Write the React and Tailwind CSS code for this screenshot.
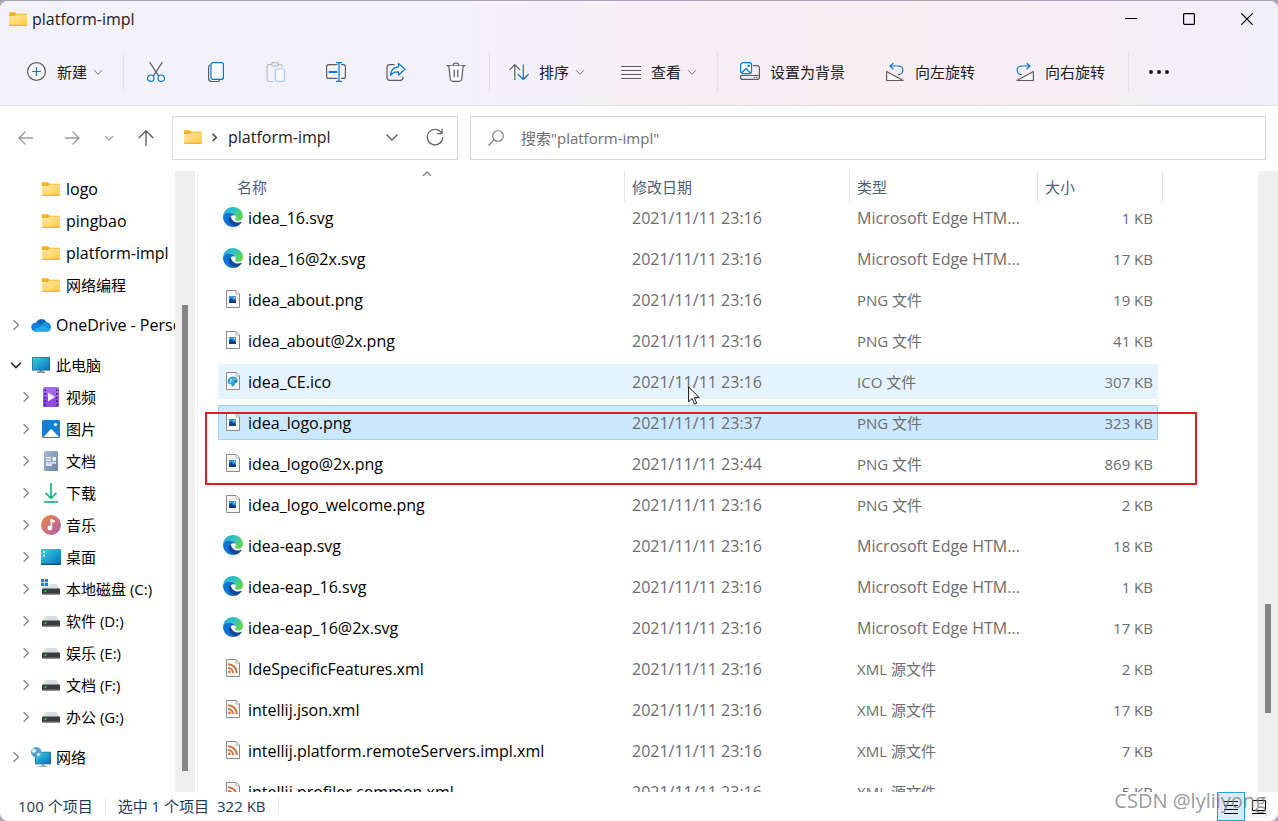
import React, { useState } from "react";

const FolderIcon = () => (
  <svg width="18" height="16" viewBox="0 0 18 16" className="shrink-0">
    <defs>
      <linearGradient id="folder" x1="0" y1="0" x2="1" y2="1">
        <stop offset="0" stopColor="#ffe7a0" />
        <stop offset="1" stopColor="#ffcb45" />
      </linearGradient>
    </defs>
    <path d="M0 2.5a1.3 1.3 0 0 1 1.3-1.3h4.4l2 1.6H17a1 1 0 0 1 1 1V8H0z" fill="#f5b117" />
    <path d="M0 5h5.8l1.7-1.4H18v10.2a1 1 0 0 1-1 1H1a1 1 0 0 1-1-1z" fill="url(#folder)" />
    <path d="M0 13.8h18a1 1 0 0 1-1 1H1a1 1 0 0 1-1-1z" fill="#e5a62c" />
  </svg>
);

const Chevron = ({ dir = "down", size = 10, color = "#777", width = 1.2 }) => {
  const paths = {
    down: "M1 3.2 5 7.2 9 3.2",
    up: "M1 6.8 5 2.8 9 6.8",
    right: "M3 1 7 5 3 9",
  };
  return (
    <svg width={size} height={size} viewBox="0 0 10 10" fill="none" className="shrink-0">
      <path d={paths[dir]} stroke={color} strokeWidth={(width * 10) / size} />
    </svg>
  );
};

const Line = ({ children, size = 20 }) => (
  <svg
    width={size}
    height={size}
    viewBox="0 0 20 20"
    fill="none"
    stroke="#5c5c5f"
    strokeWidth="1.2"
    strokeLinecap="round"
    strokeLinejoin="round"
    className="shrink-0"
  >
    {children}
  </svg>
);

const BLUE = "#0078d4";

const NewIcon = () => (
  <Line>
    <circle cx="9.5" cy="9.5" r="8.9" fill="#fafafd" />
    <path d="M9.5 5.5v8M5.5 9.5h8" stroke={BLUE} />
  </Line>
);
const CutIcon = () => (
  <Line>
    <path d="M4 .6 12.3 13.6M16 .6 7.7 13.6" />
    <circle cx="4.8" cy="16.2" r="3.2" stroke={BLUE} />
    <circle cx="15.2" cy="16.2" r="3.2" stroke={BLUE} />
  </Line>
);
const CopyIcon = () => (
  <Line>
    <path d="M4 3C3 3.4 2.6 4 2.6 5v11.500a3 3 0 0 0 3 3h5.600c1.200 0 2-.5 2.500-1.500" />
    <rect x="5" y=".6" width="12.400" height="16.800" rx="2" stroke={BLUE} fill="#fafafd" />
  </Line>
);
const PasteIcon = () => (
  <Line>
    <g stroke="#bdbbc2">
      <path d="M6 2.500H2.600a1.500 1.500 0 0 0-1.500 1.500v14a1.500 1.500 0 0 0 1.500 1.500h4.800M12 2.500h2.500A1.500 1.500 0 0 1 16 4v1" />
      <rect x="5.500" y=".7" width="7" height="3.200" rx="1.600" />
    </g>
    <rect x="9.300" y="7" width="9.200" height="12.400" rx="1.500" stroke="#a5cdf0" fill="#f6f8fd" />
  </Line>
);
const RenameIcon = () => (
  <Line>
    <path d="M11 2.600H2.800a2.200 2.200 0 0 0-2.200 2.200v9.400a2.200 2.200 0 0 0 2.200 2.200H11M15.500 2.600h1.700a2.200 2.200 0 0 1 2.200 2.200v9.400a2.200 2.200 0 0 1-2.200 2.200h-1.700" />
    <path d="M3.500 10h7" stroke={BLUE} strokeWidth="2" />
    <path d="M10.500.6h5M13 .6v18.800M10.500 19.400h5" stroke={BLUE} />
  </Line>
);
const ShareIcon = () => (
  <Line>
    <path d="M8 2.600H3.800A2.800 2.800 0 0 0 1 5.400v10.200a2.800 2.800 0 0 0 2.800 2.800h10.400a2.800 2.800 0 0 0 2.800-2.800V15" />
    <path
      d="M12.500 1.500 19 7.300l-6.500 5.700V9.800C8.800 9.600 6.300 10.800 4.500 13.500 4.800 8.700 7.500 5.300 12.500 4.900z"
      stroke={BLUE}
      fill="#f8fafe"
    />
  </Line>
);
const TrashIcon = () => (
  <Line>
    <path d="M1 3.600h18M7.200 3.400a2.800 2.400 0 0 1 5.600 0" />
    <path d="M2.800 3.800l1.500 13.400a2.500 2.500 0 0 0 2.400 2.200h6.600a2.500 2.500 0 0 0 2.400-2.200l1.500-13.400" fill="#fafafd" />
    <path d="M8.200 8v6.500M11.800 8v6.500" />
  </Line>
);
const SortIcon = () => (
  <Line>
    <path d="M5.800 17.500V2.800M.8 7.600 5.800 2.600l5 5" />
    <path d="M14.300 2.800v14.500M9.300 12.500l5 5 5-5" stroke={BLUE} />
  </Line>
);
const ViewIcon = () => (
  <Line>
    <path d="M0 4.500h20M0 8.500h20M0 12.500h20M0 16.500h20" strokeLinecap="butt" />
  </Line>
);
const WallpaperIcon = () => (
  <Line>
    <path d="M13.500 3.600h3.700a2.200 2.200 0 0 1 2.200 2.200v9.400a2.200 2.200 0 0 1-2.200 2.200H2.800a2.200 2.200 0 0 1-2.200-2.200V13.500h18.800M14 15.500h.5M16.500 15.500h.5" />
    <rect x=".6" y=".6" width="11" height="11" rx="2.500" stroke={BLUE} fill="#fafafd" />
    <path d="m2 10.500 4-4 4 4" stroke={BLUE} />
    <circle cx="8.600" cy="3.800" r=".6" stroke={BLUE} />
  </Line>
);
const RotateIcon = ({ flip }) => (
  <Line>
    <g transform={flip ? "matrix(-1 0 0 1 20 0)" : undefined}>
      <path d="M1.600 9.500v9h16.500z" fill="#fbfbfc" />
      <path d="M8 1.500 5 4l3 2.800M5.200 4h8.300a4.300 4.300 0 0 1 0 8.600" stroke={BLUE} />
    </g>
  </Line>
);
const MoreIcon = () => (
  <svg width="22" height="6" viewBox="0 0 22 6" fill="#1b1b1b">
    <circle cx="3" cy="3" r="2" />
    <circle cx="11" cy="3" r="2" />
    <circle cx="19" cy="3" r="2" />
  </svg>
);

const ArrowIcon = ({ dir, color }) => {
  const paths = {
    left: "M1 8h14M7.500 1.500 1 8l6.500 6.500",
    right: "M15 8H1M8.500 1.500 15 8l-6.500 6.500",
    up: "M8 16V1M.8 8 8 .8 15.200 8",
  };
  return (
    <svg width="16" height="16" viewBox="0 0 16 16" fill="none" stroke={color} strokeWidth="1.300">
      <path d={paths[dir]} />
    </svg>
  );
};

// navigation pane icons
const CloudIcon = () => (
  <svg width="20" height="20" viewBox="0 0 20 20">
    <path d="M5 8a5.800 5.800 0 0 1 10.500-1L13 13 3 9z" fill="#0364b8" />
    <path d="M14 7a5.200 5.200 0 0 1 6 5c0 1.500-.8 3-2 3.700L9 11z" fill="#1490df" />
    <path d="M4.500 7.800A6 6 0 0 1 9 8.600l8.500 7.600H4.300a4.200 4.200 0 0 1 .2-8.400z" fill="#0f7fdb" />
    <path d="M1.300 15.300 11.500 10.600l8 4a3.500 3.500 0 0 1-2.700 2.100H4.300a4 4 0 0 1-3-1.400z" fill="#28a8ea" />
  </svg>
);
const PcIcon = () => (
  <svg width="20" height="20" viewBox="0 0 20 20">
    <defs>
      <linearGradient id="screen" x1="0" y1="0" x2="1" y2="1">
        <stop offset="0" stopColor="#37d6e0" />
        <stop offset="1" stopColor="#0a6cbd" />
      </linearGradient>
    </defs>
    <path d="M8.500 15h3v2h-3z" fill="#8ea0aa" />
    <path d="M6 16.600h8v1.200H6z" fill="#5f7079" />
    <rect x="1" y="2" width="18" height="13.500" rx=".6" fill="#30576b" />
    <rect x="1.600" y="2.600" width="16.800" height="12.300" fill="url(#screen)" />
  </svg>
);
const VideoIcon = () => (
  <svg width="20" height="20" viewBox="0 0 20 20">
    <rect x="2" width="16" height="20" rx="1.500" fill="#a066ee" />
    <path d="M2 10h16v8.500a1.500 1.500 0 0 1-1.500 1.500h-13A1.500 1.500 0 0 1 2 18.500z" fill="#8f4ae2" />
    <path d="M4.200 2.500v16M15.800 2.500v16" stroke="#3d2170" strokeWidth="1.600" strokeDasharray="1.600 2" />
    <path d="m7 5.500 7 4.500-7 4.500z" fill="#f4effc" />
  </svg>
);
const PictureIcon = () => (
  <svg width="20" height="20" viewBox="0 0 20 20">
    <rect x="1" y="1" width="18" height="18" rx="1.500" fill="#1380d3" />
    <path d="m2.500 18 7-7.500a1 1 0 0 1 1.400 0l7 7.500z" fill="#fff" />
    <circle cx="14.500" cy="5.500" r="1.600" fill="#fff" />
  </svg>
);
const DocumentIcon = () => (
  <svg width="20" height="20" viewBox="0 0 20 20">
    <defs>
      <linearGradient id="doc" x1="0" y1="0" x2="1" y2="1">
        <stop offset="0" stopColor="#a9bdd3" />
        <stop offset="1" stopColor="#6583a6" />
      </linearGradient>
    </defs>
    <rect x="3" width="14" height="20" rx="1.200" fill="url(#doc)" />
    <path d="M5 6.600h5M5 9.200h5M5 11.800h10M5 14h6" stroke="#fff" strokeWidth="1.300" />
    <path d="M11.500 6h3.500v3.800h-3.500z" fill="#fff" />
  </svg>
);
const DownloadIcon = () => (
  <svg width="20" height="20" viewBox="0 0 20 20" fill="none" stroke="#1bb08b" strokeWidth="1.700">
    <path d="M10 0v15M4.500 9.800 10 15.300l5.500-5.500" />
    <path d="M3 19h14" />
  </svg>
);
const MusicIcon = () => (
  <svg width="20" height="20" viewBox="0 0 20 20">
    <defs>
      <linearGradient id="music" x1="0" y1="0" x2="1" y2="1">
        <stop offset="0" stopColor="#f0883e" />
        <stop offset="1" stopColor="#a95cb0" />
      </linearGradient>
    </defs>
    <circle cx="10" cy="10" r="10" fill="url(#music)" />
    <circle cx="8.800" cy="13" r="2.400" fill="#fff" />
    <path d="M10.400 4v9" stroke="#fff" strokeWidth="1.600" />
    <path d="m9.600 3.800 4.200 1.600v2.400L9.600 6.500z" fill="#fff" />
  </svg>
);
const DesktopIcon = () => (
  <svg width="20" height="20" viewBox="0 0 20 20">
    <rect y="2" width="20" height="16" rx="1" fill="url(#screen)" />
    <path d="M2 4h2v2H2zM2 7.500h2v2H2z" fill="#fff" />
    <path d="M0 16.800h20V17a1 1 0 0 1-1 1H1a1 1 0 0 1-1-1z" fill="#0b4a79" />
  </svg>
);
const DriveIcon = ({ system }) => (
  <svg width="20" height="20" viewBox="0 0 20 20">
    <path d="M4.500 5h11L19 10H1z" fill="#dcdee0" />
    <rect x="1" y="9.500" width="18" height="6" rx=".8" fill="#3b3d40" />
    <path d="M1.500 14.500h17v.8h-17z" fill="#77797c" />
    <circle cx="4.500" cy="12" r=".9" fill="#4ade4a" />
    {system && <path d="M-.5-1h8.500v8H-.5z" fill="#fff" />}
    {system && <path d="M0 0h3.200v3.200H0zM3.900 0h3.200v3.200H3.900zM0 3.900h3.200v3.200H0zM3.900 3.900h3.200v3.200H3.900z" fill="#0a84d8" />}
  </svg>
);
const NetworkIcon = () => (
  <svg width="20" height="20" viewBox="0 0 20 20">
    <path d="M10.500 17h3v2h-3z" fill="#a5b3ba" />
    <path d="M8 18.800h8v1H8z" fill="#87969e" />
    <rect x="4" y="4.800" width="16" height="12.500" rx=".6" fill="#1f5e83" />
    <rect x="4.600" y="5.400" width="14.800" height="11.300" fill="url(#screen)" />
    <circle cx="5.300" cy="5.300" r="5.300" fill="#5a9fc6" />
    <path d="M2 1.500c3 .5 4 1.500 3 3S2 6 .8 5A5 5 0 0 1 2 1.500zM6 6.500c2-.6 3.500 0 3.500.6A5 5 0 0 1 6.500 10z" fill="#d5ecf7" />
  </svg>
);

// file list icons
const EdgeIcon = () => (
  <svg width="20" height="20" viewBox="0 0 20 20">
    <defs>
      <linearGradient id="edgeTop" x1="0" y1="0" x2="1" y2=".6">
        <stop offset="0" stopColor="#1ba7e0" />
        <stop offset=".5" stopColor="#2fc3c4" />
        <stop offset="1" stopColor="#62d84c" />
      </linearGradient>
    </defs>
    <path d="M0 9.500C.4 4 4.700 0 10 0c6 0 10 4.500 10 8.800 0 3-2.200 5-5 5-1.700 0-3.200-.7-3-1.700.1-.5 1-.9 1-2.500C13 7.500 10.500 5.500 7 5.500 4 5.500 1.500 7 0 9.500z" fill="url(#edgeTop)" />
    <path d="M0 9.800C.5 7 3.200 5.400 6.500 5.400c3.500 0 6.300 2 6.500 4.600-.5-1.300-2-1.900-3-1.700-2 .3-3.500 2.200-3.300 4.700.2 3.400 2.600 6.300 5.800 6.700-.8.200-1.600.3-2.500.3C4.500 20 0 15.500 0 9.800z" fill="#0c74d4" />
    <path d="M7.800 9.200C5.500 10 5 13 6.600 15.800c1.300 2.400 3.600 4 6 3.900 2.700-.6 5-2.300 6.200-4.600.2-.4-.1-.5-.5-.3-1 .5-2 .7-3.200.7-3.800 0-7-2.600-7.300-6.300z" fill="#114a9b" />
  </svg>
);
const Sheet = ({ children }) => (
  <svg width="20" height="20" viewBox="0 0 20 20">
    <path d="M3.500 1.500h9.800l3.200 3.200v13.800h-13z" fill="#fafafa" stroke="#8a8a8a" />
    <path d="M13 1.500V5h3.500" fill="#fff" stroke="#9a9a9a" strokeWidth=".8" />
    {children}
  </svg>
);
const PngIcon = () => (
  <Sheet>
    <rect x="6" y="7" width="7" height="7" fill="#2f96e0" />
    <path d="M6 14v-3l2.300-2 2.300 2.500 1-1L13 12.300V14z" fill="#0c3f86" />
    <circle cx="11.500" cy="8.500" r=".7" fill="#d8ecfb" />
  </Sheet>
);
const IcoIcon = () => (
  <Sheet>
    <path d="M4.800 12a5 5 0 0 1 10-2.500c.2 2-.8 2.600-2.200 2.300-.8 2.300-2 4.200-3.500 3.600-1-.4-.4-1.900-1.200-2.200s-3.100.5-3.100-1.200z" fill="#2aa5dc" />
    <path d="M6 12.500 9.500 9" stroke="#e8f5fb" strokeWidth=".9" />
    <circle cx="8" cy="8.800" r="1" fill="#f6d34b" />
    <circle cx="11" cy="8" r="1" fill="#8cc152" />
    <circle cx="13" cy="10.200" r="1" fill="#0b5ea8" />
  </Sheet>
);
const XmlIcon = () => (
  <Sheet>
    <g fill="none" stroke="#d2703a" strokeWidth="2">
      <path d="M5 6.200a8.800 8.800 0 0 1 8.800 8.800M5 10a5 5 0 0 1 5 5" />
    </g>
    <circle cx="6.400" cy="13.800" r="1.400" fill="#d2703a" />
  </Sheet>
);

const fileTypes = {
  svg: { label: "Microsoft Edge HTM...", Icon: EdgeIcon, text: "text-base" },
  png: { label: "PNG 文件", Icon: PngIcon, text: "text-[15px]" },
  ico: { label: "ICO 文件", Icon: IcoIcon, text: "text-[15px]" },
  xml: { label: "XML 源文件", Icon: XmlIcon, text: "text-[15px]" },
};

const files = [
  { name: "idea_16.svg", date: "2021/11/11 23:16", size: "1 KB" },
  { name: "idea_16@2x.svg", date: "2021/11/11 23:16", size: "17 KB" },
  { name: "idea_about.png", date: "2021/11/11 23:16", size: "19 KB" },
  { name: "idea_about@2x.png", date: "2021/11/11 23:16", size: "41 KB" },
  { name: "idea_CE.ico", date: "2021/11/11 23:16", size: "307 KB", hovered: true },
  { name: "idea_logo.png", date: "2021/11/11 23:37", size: "323 KB" },
  { name: "idea_logo@2x.png", date: "2021/11/11 23:44", size: "869 KB" },
  { name: "idea_logo_welcome.png", date: "2021/11/11 23:16", size: "2 KB" },
  { name: "idea-eap.svg", date: "2021/11/11 23:16", size: "18 KB" },
  { name: "idea-eap_16.svg", date: "2021/11/11 23:16", size: "1 KB" },
  { name: "idea-eap_16@2x.svg", date: "2021/11/11 23:16", size: "17 KB" },
  { name: "IdeSpecificFeatures.xml", date: "2021/11/11 23:16", size: "2 KB" },
  { name: "intellij.json.xml", date: "2021/11/11 23:16", size: "17 KB" },
  { name: "intellij.platform.remoteServers.impl.xml", date: "2021/11/11 23:16", size: "7 KB" },
  { name: "intellij.profiler.common.xml", date: "2021/11/11 23:16", size: "5 KB" },
];

const pinned = ["logo", "pingbao", "platform-impl", "网络编程"];

const places = [
  { name: "视频", Icon: VideoIcon },
  { name: "图片", Icon: PictureIcon },
  { name: "文档", Icon: DocumentIcon },
  { name: "下载", Icon: DownloadIcon },
  { name: "音乐", Icon: MusicIcon },
  { name: "桌面", Icon: DesktopIcon },
  { name: "本地磁盘 (C:)", Icon: () => <DriveIcon system /> },
  { name: "软件 (D:)", Icon: DriveIcon },
  { name: "娱乐 (E:)", Icon: DriveIcon },
  { name: "文档 (F:)", Icon: DriveIcon },
  { name: "办公 (G:)", Icon: DriveIcon },
];

// latin names are set one size up from the chinese ones
const nameSize = name => (/^[\x20-\x7e]+$/.test(name) ? "text-base" : "text-[15px]");

const Divider = () => <div className="w-px h-10 bg-[#e3e0e8] shrink-0" />;

const ToolButton = ({ icon, label, menu }) => (
  <button className="flex items-center gap-[10px] whitespace-nowrap text-[#1b1b1b]">
    {icon}
    <span className="flex items-center gap-1.5">
      {label}
      {menu && <Chevron width={1} />}
    </span>
  </button>
);

const IconButton = ({ label, children, disabled }) => (
  <button aria-label={label} disabled={disabled} className="w-[60px] h-10 flex items-center justify-center">
    {children}
  </button>
);

const TitleBar = () => (
  <div className="flex items-center h-[37px] pl-[9px] pb-0.5">
    <FolderIcon />
    <h1 className="pl-[5px] flex-1 text-base leading-5 text-[#1b1b1b]">platform-impl</h1>
    <button aria-label="最小化" className="w-[58px] h-full flex items-center justify-center">
      <svg width="12" height="12" viewBox="0 0 12 12" stroke="#000">
        <path d="M0 5.500h12" />
      </svg>
    </button>
    <button aria-label="最大化" className="w-[58px] h-full flex items-center justify-center">
      <svg width="12" height="12" viewBox="0 0 12 12" stroke="#000" strokeWidth="1.200" fill="none">
        <rect x=".6" y=".6" width="10.800" height="10.800" rx="1" />
      </svg>
    </button>
    <button aria-label="关闭" className="w-[58px] h-full flex items-center justify-center mr-0.5">
      <svg width="12" height="12" viewBox="0 0 12 12" stroke="#000" strokeWidth="1.200">
        <path d="M.3.3l11.400 11.400M11.700.3.3 11.700" />
      </svg>
    </button>
  </div>
);

const Toolbar = () => (
  <div className="flex items-center h-[67px] pl-[27px]">
    <ToolButton icon={<NewIcon />} label="新建" menu />
    <div className="flex items-center pl-5">
      <Divider />
      <div className="flex pl-0.5 pr-[3px]">
        <IconButton label="剪切"><CutIcon /></IconButton>
        <IconButton label="复制"><CopyIcon /></IconButton>
        <IconButton label="粘贴" disabled><PasteIcon /></IconButton>
        <IconButton label="重命名"><RenameIcon /></IconButton>
        <IconButton label="共享"><ShareIcon /></IconButton>
        <IconButton label="删除"><TrashIcon /></IconButton>
      </div>
      <Divider />
    </div>
    <div className="flex items-center gap-9 pl-[19px] pr-5">
      <ToolButton icon={<SortIcon />} label="排序" menu />
      <ToolButton icon={<ViewIcon />} label="查看" menu />
    </div>
    <Divider />
    <div className="flex items-center gap-10 pl-[22px] pr-[23px]">
      <ToolButton icon={<WallpaperIcon />} label="设置为背景" />
      <ToolButton icon={<RotateIcon />} label="向左旋转" />
      <ToolButton icon={<RotateIcon flip />} label="向右旋转" />
    </div>
    <Divider />
    <button aria-label="查看更多" className="pl-[19px]">
      <MoreIcon />
    </button>
  </div>
);

const AddressRow = () => (
  <div className="flex items-start h-[65px] pr-3 pl-[18px] pt-[10px]">
    <div className="flex items-center shrink-0 w-[154px] h-11">
      <button aria-label="后退" className="w-4"><ArrowIcon dir="left" color="#9a9a9a" /></button>
      <button aria-label="前进" className="w-4 ml-[30px]"><ArrowIcon dir="right" color="#9a9a9a" /></button>
      <button aria-label="最近浏览的位置" className="ml-6"><Chevron color="#9a9a9a" /></button>
      <button aria-label="上移" className="w-4 ml-6"><ArrowIcon dir="up" color="#555" /></button>
    </div>
    <div className="flex items-center shrink-0 w-[286px] h-11 border border-[#d9d9d9] pl-[11px] pr-[13px] pb-0.5">
      <FolderIcon />
      <span className="pl-2"><Chevron dir="right" size={9} color="#444" width={1.5} /></span>
      <button className="flex-1 text-left pl-[9px] text-base leading-5 text-[#1b1b1b]">platform-impl</button>
      <button aria-label="以前的位置"><Chevron size={14} color="#555" /></button>
      <button aria-label="刷新" className="pl-[27px]">
        <svg width="18" height="18" viewBox="0 0 18 18" fill="none" stroke="#666" strokeWidth="1.300">
          <path d="M15.800 5.500A7.700 7.700 0 1 0 16.700 9M16 .8v4.900h-4.900" />
        </svg>
      </button>
    </div>
    <label className="flex items-center flex-1 h-11 ml-3 border border-[#d9d9d9] pl-[17px]">
      <svg width="16" height="16" viewBox="0 0 16 16" fill="none" stroke="#777" strokeWidth="1.100" className="shrink-0">
        <circle cx="10" cy="6" r="5.300" />
        <path d="M6 9.800.5 15.500" />
      </svg>
      <input
        type="text"
        aria-label="搜索"
        placeholder={'搜索"platform-impl"'}
        className="flex-1 min-w-0 pl-[17px] outline-none placeholder:text-[#6e6e6e]"
      />
    </label>
  </div>
);

const Scrollbar = ({ children }) => (
  <div className="w-5 shrink-0 flex flex-col bg-[#efefef] pl-[7px]">{children}</div>
);

const Sidebar = () => (
  <>
    <nav className="w-[175px] shrink-0 overflow-hidden flex flex-col gap-2 pt-0.5 text-black whitespace-nowrap">
      <ul>
        {pinned.map(name => (
          <li key={name}>
            <a href="#" className={`flex items-center h-8 pl-[42px] gap-1.5 ${nameSize(name)}`}>
              <FolderIcon />
              {name}
            </a>
          </li>
        ))}
      </ul>
      <a href="#" className="flex items-center h-8 pl-[10px] gap-[5px]">
        <Chevron dir="right" size={12} color="#8a8a8a" width={1.4} />
        <span className="pl-1"><CloudIcon /></span>
        <span className="text-base">OneDrive - Personal</span>
      </a>
      <div>
        <a href="#" className="flex items-center h-8 pl-[10px] gap-[5px]">
          <Chevron size={12} color="#222" width={1.5} />
          <span className="pl-1"><PcIcon /></span>
          此电脑
        </a>
        <ul>
          {places.map(({ name, Icon }) => (
            <li key={name}>
              <a href="#" className="flex items-center h-8 pl-5 gap-[5px]">
                <Chevron dir="right" size={12} color="#8a8a8a" width={1.4} />
                <span className="pl-1"><Icon /></span>
                {name}
              </a>
            </li>
          ))}
        </ul>
      </div>
      <a href="#" className="flex items-center h-8 pl-[10px] gap-[5px]">
        <Chevron dir="right" size={12} color="#8a8a8a" width={1.4} />
        <span className="pl-1"><NetworkIcon /></span>
        网络
      </a>
    </nav>
    <Scrollbar>
      <div className="basis-[21.5%]" />
      <div className="w-1.5 basis-[75.2%] bg-[#858585]" />
    </Scrollbar>
  </>
);

const rowStyle = (selected, hovered) => {
  if (selected) return "bg-[#cce8ff] border-[#99d1ff]";
  if (hovered) return "bg-[#e5f3ff] border-[#e5f3ff]";
  return "border-transparent";
};

const FileList = () => {
  const [selected, setSelected] = useState("idea_logo.png");

  return (
    <main className="relative flex-1 min-w-0 flex ml-0.5 border-l border-[#f3f3f3]">
      <div className="flex-1 min-w-0 overflow-hidden pl-5">
        <table className="table-fixed w-[945px] border-separate border-spacing-0 text-left">
          <colgroup>
            <col className="w-[407px]" />
            <col className="w-[225px]" />
            <col className="w-[188px]" />
            <col className="w-[125px]" />
          </colgroup>
          <thead className="text-[#4c607a]">
            <tr>
              <th className="p-0 font-normal">
                <div className="relative flex items-center h-8 -mb-1.5 ml-3 pl-[7px] border-r border-[#e5e5e5]">
                  名称
                  <span className="absolute top-[-2px] left-1/2 -translate-x-1/2">
                    <Chevron dir="up" />
                  </span>
                </div>
              </th>
              <th className="p-0 font-normal">
                <div className="flex items-center h-8 -mb-1.5 pl-[7px] border-r border-[#e5e5e5]">修改日期</div>
              </th>
              <th className="p-0 font-normal">
                <div className="flex items-center h-8 -mb-1.5 pl-[7px] border-r border-[#e5e5e5]">类型</div>
              </th>
              <th className="p-0 font-normal">
                <div className="flex items-center h-8 -mb-1.5 pl-[7px] border-r border-[#e5e5e5]">大小</div>
              </th>
            </tr>
          </thead>
          <tbody className="text-[#6d6d6d]">
            {files.map(f => {
              const { label, Icon, text } = fileTypes[f.name.split(".").pop()];
              const style = rowStyle(f.name === selected, f.hovered);
              return (
                <tr key={f.name} onClick={() => setSelected(f.name)}>
                  <td className="p-0">
                    <div className={`flex items-center gap-[5px] h-[35px] my-[3px] pl-1 border-y border-l rounded-l-xs text-base text-black ${style}`}>
                      <span className="pb-0.5"><Icon /></span>
                      {f.name}
                    </div>
                  </td>
                  <td className="p-0">
                    <div className={`flex items-center h-[35px] my-[3px] pl-[7px] border-y text-base ${style}`}>{f.date}</div>
                  </td>
                  <td className="p-0">
                    <div className={`flex items-center h-[35px] my-[3px] pl-[7px] border-y ${text} ${style}`}>{label}</div>
                  </td>
                  <td className="p-0">
                    <div className={`flex items-center justify-end h-[35px] my-[3px] mr-[5px] pr-1 border-y border-r rounded-r-xs ${style}`}>
                      {f.size}
                    </div>
                  </td>
                </tr>
              );
            })}
          </tbody>
        </table>
      </div>
      <Scrollbar>
        <div className="basis-[69.7%]" />
        <div className="w-1.5 basis-[17.6%] bg-[#858585]" />
      </Scrollbar>

      {/* highlighted files */}
      <div className="absolute left-[7px] top-[241px] w-[992px] h-[73px] border-2 border-[#e31b23] pointer-events-none" />

      {/* mouse pointer */}
      <svg width="13" height="20" viewBox="0 0 13 20" className="absolute left-[490px] top-[215px] pointer-events-none">
        <path d="M.6 1v14.800l3.500-3.300 2.300 5.700 2.300-1-2.300-5.500h4.900z" fill="#fff" stroke="#111" />
      </svg>
    </main>
  );
};

const StatusBar = () => (
  <footer className="relative flex items-center h-[29px] pl-[18px] pr-[9px] text-[#1e395b]">
    <div className="flex items-center pb-0.5">
      <span className="pr-3">100 个项目</span>
      <div className="w-px h-4 bg-[#e8e8e8]" />
      <span className="pl-3 pr-2">选中 1 个项目</span>
      <span className="pr-3">322 KB</span>
      <div className="w-px h-4 bg-[#e8e8e8]" />
    </div>
    <div className="flex items-center gap-1 h-full ml-auto">
      <button aria-label="详细信息" className="w-7 h-full flex items-center justify-center bg-[#d9ebf7] border border-[#26a0da]">
        <svg width="14" height="14" viewBox="0 0 14 14" stroke="#000">
          <path d="M0 1.500h14M0 5.500h14M0 9.500h14M0 13.500h14" />
        </svg>
      </button>
      <button aria-label="大缩略图" className="w-5 h-5 flex items-center justify-center bg-[#f5f5f5]">
        <svg width="14" height="14" viewBox="0 0 14 14" stroke="#000" fill="none">
          <path d="M.5.500h13v10H.5zM0 13.500h14" />
        </svg>
      </button>
    </div>
    <span className="absolute right-3 bottom-1.5 text-[20px] leading-7 text-[#808080]/80 pointer-events-none">CSDN @lyliiyong</span>
  </footer>
);

const App = () => {
  return (
    <div className="h-screen pt-px bg-[#aaa3b5] font-['Open_Sans','Noto_Sans_CJK_SC',sans-serif] text-[15px] leading-5">
      <div className="h-full flex flex-col bg-white rounded-lg overflow-hidden">
        <header className="shrink-0 border-b border-[#dedbe3] bg-linear-to-r from-[#f3f1f9] from-35% via-[#faedf2] via-68% to-[#f2f0f8]">
          <TitleBar />
          <Toolbar />
        </header>
        <AddressRow />
        <div className="flex flex-1 min-h-0">
          <Sidebar />
          <FileList />
        </div>
        <StatusBar />
      </div>
    </div>
  );
};

export default App;
